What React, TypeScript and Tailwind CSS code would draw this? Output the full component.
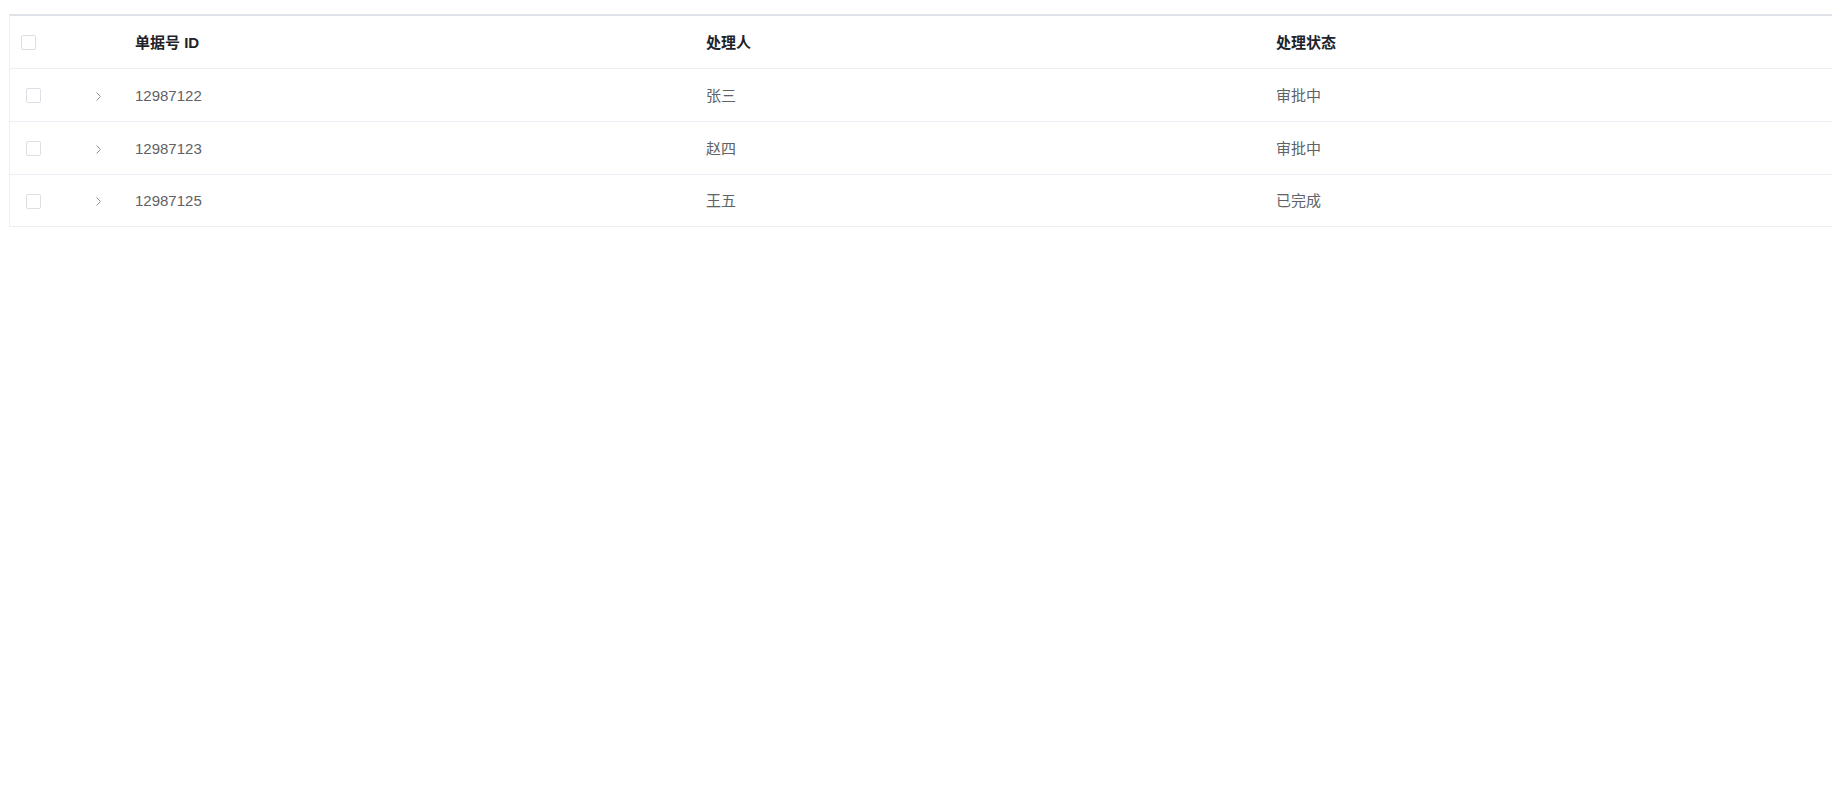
const rows = [
  { id: "12987122", name: "张三", status: "审批中" },
  { id: "12987123", name: "赵四", status: "审批中" },
  { id: "12987125", name: "王五", status: "已完成" },
];

const Checkbox = () => (
  <span className="-mt-[1px] inline-block h-[15px] w-[15px] rounded-[2px] border border-[#dcdfe6] bg-white" />
);

const Chevron = () => (
  <svg width="7" height="11" viewBox="0 0 7 11" fill="none">
    <path d="M1.5 1.5 L5.5 5.5 L1.5 9.5" stroke="#909399" strokeWidth="1" />
  </svg>
);

export default function App() {
  return (
    <div
      className="h-[812px] w-[1832px] overflow-hidden bg-white pl-[9px] pt-[14px]"
      style={{ fontFamily: '"Liberation Sans", "Noto Sans CJK SC", sans-serif' }}
    >
      <div className="w-[1860px] border-t-2 border-l border-b border-t-[#dfe2e8] border-l-[#ebeef5] border-b-[#ebeef5] text-[15px]">
        {/* header */}
        <div className="grid h-[53px] grid-cols-[60px_65px_571px_570px_1fr] items-center border-b border-[#ebeef5] pt-[2px] font-bold text-[#1f2329]">
          <div className="flex pl-[11px]">
            <Checkbox />
          </div>
          <div />
          <div>单据号 ID</div>
          <div>处理人</div>
          <div>处理状态</div>
        </div>

        {rows.map((r, i) => (
          <div
            key={r.id}
            className={`grid grid-cols-[60px_65px_571px_570px_1fr] items-center pt-[2px] text-[#606266] ${
              i < rows.length - 1 ? "h-[53px] border-b border-[#ebeef5]" : "h-[51px]"
            }`}
          >
            <div className="flex pl-[16px]">
              <Checkbox />
            </div>
            <div className="flex pl-[25px]">
              <Chevron />
            </div>
            <div>{r.id}</div>
            <div>{r.name}</div>
            <div>{r.status}</div>
          </div>
        ))}
      </div>
    </div>
  );
}
